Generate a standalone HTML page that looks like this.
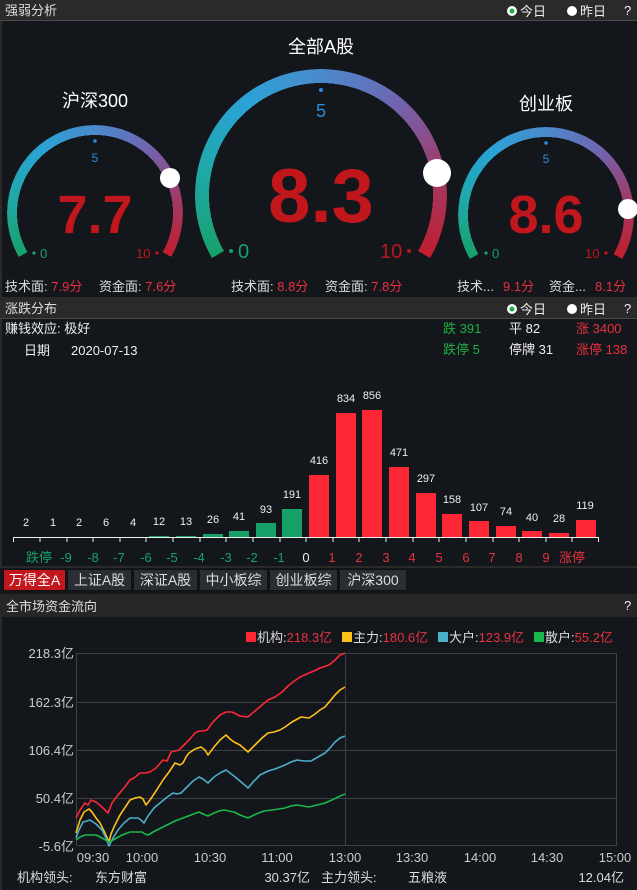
<!DOCTYPE html>
<html><head><meta charset="utf-8"><style>
*{margin:0;padding:0;box-sizing:border-box}
body{width:637px;height:890px;background:#13161b;position:relative;overflow:hidden;font-family:"Liberation Sans","Noto Sans CJK SC",sans-serif}
.bar{position:absolute;left:0;width:637px;background:#2a2a2a;border-bottom:1px solid #4a4a4a}
.ring{position:absolute;border-radius:50%;
background:conic-gradient(from 240deg,#17a168 0deg,#1fa8a8 40deg,#2aa3d6 80deg,#4a8acc 120deg,#7064b0 160deg,#a03a66 200deg,#c01e2c 240deg,transparent 240deg)}
.tab{position:absolute;top:569px;height:22px;background:#2a2d33;border:1px solid #111;color:#ddd;font-size:14px;line-height:20px;text-align:center}
svg{position:absolute;left:0;top:0}
</style></head><body>
<div class="bar" style="top:0;height:21px"></div>
<div class="bar" style="top:297px;height:22px"></div>
<div class="bar" style="top:594px;height:23px;border-bottom:none;background:#262626"></div>
<div style="position:absolute;left:0;top:21px;width:2px;height:276px;background:#2a2a2a"></div>
<div style="position:absolute;left:0;top:319px;width:2px;height:248px;background:#2a2a2a"></div>
<div style="position:absolute;left:0;top:617px;width:2px;height:273px;background:#2a2a2a"></div>
<div style="position:absolute;left:0;top:566px;width:637px;height:2px;background:#2a2a2a"></div>

<div class="ring" style="left:7px;top:125px;width:176px;height:176px;-webkit-mask:radial-gradient(closest-side,transparent calc(100% - 10px),#000 calc(100% - 10px));mask:radial-gradient(closest-side,transparent calc(100% - 10px),#000 calc(100% - 10px))"></div>
<div class="ring" style="left:195px;top:69px;width:252px;height:252px;-webkit-mask:radial-gradient(closest-side,transparent calc(100% - 14px),#000 calc(100% - 14px));mask:radial-gradient(closest-side,transparent calc(100% - 14px),#000 calc(100% - 14px))"></div>
<div class="ring" style="left:458px;top:127px;width:176px;height:176px;-webkit-mask:radial-gradient(closest-side,transparent calc(100% - 10px),#000 calc(100% - 10px));mask:radial-gradient(closest-side,transparent calc(100% - 10px),#000 calc(100% - 10px))"></div>

<div class="tab" style="left:3px;width:63px;background:#c0181c;color:#fff">万得全A</div>
<div class="tab" style="left:67px;width:65px">上证A股</div>
<div class="tab" style="left:133px;width:65px">深证A股</div>
<div class="tab" style="left:199px;width:69px">中小板综</div>
<div class="tab" style="left:269px;width:69px">创业板综</div>
<div class="tab" style="left:339px;width:68px">沪深300</div>

<svg width="637" height="890" font-family="Liberation Sans, Noto Sans CJK SC, sans-serif">
<!-- headers -->
<g font-size="13" fill="#ddd">
<text x="5" y="15">强弱分析</text>
<text x="5" y="313">涨跌分布</text>
<text x="6" y="611">全市场资金流向</text>
</g>
<g font-size="13" fill="#eee">
<circle cx="512" cy="11" r="5" fill="#fff"/><circle cx="512" cy="11" r="2.5" fill="#1fb040"/>
<text x="520" y="16">今日</text>
<circle cx="572" cy="11" r="5" fill="#fff"/><text x="580" y="16">昨日</text>
<text x="624" y="15">?</text>
<circle cx="512" cy="309" r="5" fill="#fff"/><circle cx="512" cy="309" r="2.5" fill="#1fb040"/>
<text x="520" y="314">今日</text>
<circle cx="572" cy="309" r="5" fill="#fff"/><text x="580" y="314">昨日</text>
<text x="624" y="313">?</text>
<text x="624" y="610">?</text>
</g>
<!-- gauges -->
<circle cx="170" cy="178" r="10" fill="#fff"/>
<circle cx="437" cy="173" r="14" fill="#fff"/>
<circle cx="628" cy="209" r="10" fill="#fff"/>
<g text-anchor="middle" fill="#fff" font-size="18">
<text x="95" y="107">沪深300</text>
<text x="321" y="53">全部A股</text>
<text x="546" y="110">创业板</text>
</g>
<g text-anchor="middle" fill="#c0161c" font-weight="bold">
<text x="95" y="233" font-size="54">7.7</text>
<text x="321" y="222" font-size="76">8.3</text>
<text x="546" y="233" font-size="54">8.6</text>
</g>
<g fill="#2a8de0" text-anchor="middle">
<circle cx="95" cy="141" r="1.8"/><text x="95" y="162" font-size="12">5</text>
<circle cx="321" cy="90" r="2"/><text x="321" y="117" font-size="18">5</text>
<circle cx="546" cy="143" r="1.8"/><text x="546" y="163" font-size="12">5</text>
</g>
<g fill="#17a168">
<circle cx="34" cy="253" r="1.6"/><text x="40" y="258" font-size="13">0</text>
<circle cx="231" cy="251" r="2"/><text x="238" y="258" font-size="20">0</text>
<circle cx="486" cy="253" r="1.6"/><text x="492" y="258" font-size="13">0</text>
</g>
<g fill="#c0161c">
<text x="136" y="258" font-size="13">10</text><circle cx="157" cy="253" r="1.6"/>
<text x="380" y="258" font-size="20">10</text><circle cx="409" cy="251" r="2"/>
<text x="585" y="258" font-size="13">10</text><circle cx="606" cy="253" r="1.6"/>
</g>
<g font-size="13" fill="#ddd">
<text x="5" y="291">技术面: <tspan fill="#e8323e">7.9分</tspan></text>
<text x="99" y="291">资金面: <tspan fill="#e8323e">7.6分</tspan></text>
<text x="231" y="291">技术面: <tspan fill="#e8323e">8.8分</tspan></text>
<text x="325" y="291">资金面: <tspan fill="#e8323e">7.8分</tspan></text>
<text x="457" y="291">技术...</text><text x="503" y="291" fill="#e8323e">9.1分</text>
<text x="549" y="291">资金...</text><text x="595" y="291" fill="#e8323e">8.1分</text>
</g>
<!-- distribution -->
<g font-size="13" fill="#eee">
<text x="5" y="333">赚钱效应: 极好</text>
<text x="24" y="355">日期</text><text x="71" y="355">2020-07-13</text>
<text x="443" y="333" fill="#1fb040">跌 391</text>
<text x="509" y="333">平 82</text>
<text x="576" y="333" fill="#e8323e">涨 3400</text>
<text x="443" y="354" fill="#1fb040">跌停 5</text>
<text x="509" y="354">停牌 31</text>
<text x="576" y="354" fill="#e8323e">涨停 138</text>
</g>
<g fill="#17a168">
<rect x="149" y="536" width="20" height="1"/><rect x="176" y="536" width="20" height="1"/>
<rect x="203" y="534" width="20" height="3"/><rect x="229" y="531" width="20" height="6"/>
<rect x="256" y="523" width="20" height="14"/><rect x="282" y="509" width="20" height="28"/>
</g>
<g fill="#fd2735">
<rect x="309" y="475" width="20" height="62"/><rect x="336" y="413" width="20" height="124"/>
<rect x="362" y="410" width="20" height="127"/><rect x="389" y="467" width="20" height="70"/>
<rect x="416" y="493" width="20" height="44"/><rect x="442" y="514" width="20" height="23"/>
<rect x="469" y="521" width="20" height="16"/><rect x="496" y="526" width="20" height="11"/>
<rect x="522" y="531" width="20" height="6"/><rect x="549" y="533" width="20" height="4"/>
<rect x="576" y="520" width="20" height="17"/>
</g>
<g font-size="11" fill="#eee" text-anchor="middle">
<text x="26" y="526">2</text><text x="53" y="526">1</text><text x="79" y="526">2</text><text x="106" y="526">6</text>
<text x="133" y="526">4</text><text x="159" y="525">12</text><text x="186" y="525">13</text><text x="213" y="523">26</text>
<text x="239" y="520">41</text><text x="266" y="513">93</text><text x="292" y="498">191</text><text x="319" y="464">416</text>
<text x="346" y="402">834</text><text x="372" y="399">856</text><text x="399" y="456">471</text><text x="426" y="482">297</text>
<text x="452" y="503">158</text><text x="479" y="511">107</text><text x="506" y="515">74</text><text x="532" y="521">40</text>
<text x="559" y="522">28</text><text x="585" y="509">119</text>
</g>
<line x1="13" y1="537.5" x2="599" y2="537.5" stroke="#eee" stroke-width="1"/>
<path stroke="#eee" stroke-width="1" d="M13.5 537v5M40 537v5M67 537v5M93 537v5M120 537v5M146 537v5M173 537v5M200 537v5M226 537v5M253 537v5M280 537v5M306 537v5M333 537v5M359 537v5M386 537v5M413 537v5M439 537v5M466 537v5M493 537v5M519 537v5M546 537v5M572 537v5M598.5 537v5"/>
<g font-size="13" text-anchor="middle" fill="#17a168">
<text x="39" y="562">跌停</text><text x="66" y="562">-9</text><text x="93" y="562">-8</text><text x="119" y="562">-7</text>
<text x="146" y="562">-6</text><text x="172" y="562">-5</text><text x="199" y="562">-4</text><text x="226" y="562">-3</text>
<text x="252" y="562">-2</text><text x="279" y="562">-1</text><text x="306" y="562" fill="#eee">0</text>
</g>
<g font-size="13" text-anchor="middle" fill="#e8323e">
<text x="332" y="562">1</text><text x="359" y="562">2</text><text x="386" y="562">3</text><text x="412" y="562">4</text>
<text x="439" y="562">5</text><text x="466" y="562">6</text><text x="492" y="562">7</text><text x="519" y="562">8</text>
<text x="546" y="562">9</text><text x="572" y="562">涨停</text>
</g>
<!-- flow chart -->
<g font-size="13">
<rect x="246" y="632" width="10" height="10" fill="#fd2735"/><text x="257" y="642" fill="#ddd">机构:<tspan fill="#e8323e">218.3亿</tspan></text>
<rect x="342" y="632" width="10" height="10" fill="#fec117"/><text x="353" y="642" fill="#ddd">主力:<tspan fill="#e8323e">180.6亿</tspan></text>
<rect x="438" y="632" width="10" height="10" fill="#4aafc8"/><text x="449" y="642" fill="#ddd">大户:<tspan fill="#e8323e">123.9亿</tspan></text>
<rect x="534" y="632" width="10" height="10" fill="#1ab84a"/><text x="545" y="642" fill="#ddd">散户:<tspan fill="#e8323e">55.2亿</tspan></text>
</g>
<g stroke="#3c3f44" stroke-width="1" fill="none">
<rect x="76.5" y="653.5" width="540" height="192"/>
<path d="M76 702.5H617M76 750.5H617M76 798.5H617M345.5 653V846"/>
</g>
<g font-size="13" fill="#ccc" text-anchor="end">
<text x="74" y="658">218.3亿</text><text x="74" y="707">162.3亿</text><text x="74" y="755">106.4亿</text>
<text x="74" y="803">50.4亿</text><text x="74" y="851">-5.6亿</text>
</g>
<g font-size="13" fill="#ccc" text-anchor="middle">
<text x="93" y="862">09:30</text><text x="142" y="862">10:00</text><text x="210" y="862">10:30</text>
<text x="277" y="862">11:00</text><text x="345" y="862">13:00</text><text x="412" y="862">13:30</text>
<text x="480" y="862">14:00</text><text x="547" y="862">14:30</text><text x="615" y="862">15:00</text>
</g>
<g fill="none" stroke-width="1.6" stroke-linejoin="round">
<polyline stroke="#fd2735" points="76,818 80,810 85,803 88,805 91,800 96,802 102,807 105,810 108,813 110,808 112,803 118,795 124,788 130,780 134,778 140,773 145,773 150,772 156,768 163,760 167,761 171,752 175,751 179,750 183,746 189,740 195,733 199,731 203,731 207,730 213,722 220,715 226,712 232,712 240,716 248,717 255,711 262,705 268,700 275,697 282,692 288,686 293,682 300,677 309,673 314,671 320,668 329,665 335,660 340,655 345,653"/>
<polyline stroke="#fec117" points="76,833 80,820 84,812 89,809 92,812 96,818 100,823 104,831 109,842 111,834 114,827 120,815 126,806 130,800 135,798 140,797 143,799 146,805 150,800 156,791 163,780 169,772 175,763 180,765 183,763 186,757 189,753 195,749 201,747 205,750 208,755 214,747 220,740 226,735 230,739 234,742 240,745 248,752 255,745 262,738 268,733 274,732 280,730 285,727 292,722 301,717 309,718 315,714 320,710 325,707 330,701 335,695 340,690 345,687"/>
<polyline stroke="#4aafc8" points="76,838 79,830 83,822 87,821 90,820 96,824 102,830 106,838 109,846 113,838 118,830 124,823 130,818 135,818 138,818 141,820 144,823 148,816 154,808 160,803 166,798 173,793 177,794 181,793 187,787 193,781 199,777 203,779 208,783 214,777 220,773 226,770 230,773 234,776 240,781 248,788 254,781 260,775 268,771 275,769 280,767 285,765 291,762 297,760 304,761 311,761 318,757 325,753 330,748 335,742 340,738 345,736"/>
<polyline stroke="#1ab84a" points="76,840 80,837 85,835 90,835 96,835 102,838 109,842 115,839 122,835 130,832 136,832 142,832 145,834 148,835 155,831 163,827 169,824 175,821 183,818 191,815 199,812 203,814 208,816 214,813 219,811 224,810 229,811 234,812 240,815 248,818 256,814 264,811 272,810 279,809 285,808 291,806 297,805 303,806 309,807 317,805 325,803 332,800 338,797 345,794"/>
</g>
<g font-size="13" fill="#ddd">
<text x="17" y="882">机构领头:</text><text x="95" y="882">东方财富</text>
<text x="310" y="882" text-anchor="end">30.37亿</text>
<text x="321" y="882">主力领头:</text><text x="408" y="882">五粮液</text>
<text x="624" y="882" text-anchor="end">12.04亿</text>
</g>
</svg>
</body></html>
